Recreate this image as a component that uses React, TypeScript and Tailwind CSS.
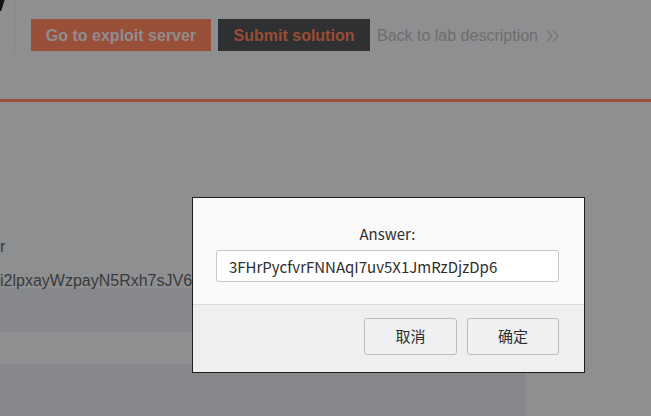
function DoubleChevron() {
  return (
    <svg width="13" height="12" viewBox="0 0 13 12" fill="none" stroke="#6e6e6f" strokeWidth="1.1">
      <polyline points="1,0.5 6,6 1,11.5" />
      <polyline points="7,0.5 12,6 7,11.5" />
    </svg>
  );
}

export default function App() {
  return (
    <div className="relative h-[416px] w-[651px] overflow-hidden bg-[#8e8f91] font-['Liberation_Sans',Arial,sans-serif]">
      <header className="relative flex h-[99px]">
        <svg className="absolute left-0 top-0" width="6" height="12" viewBox="0 0 6 12">
          <polygon points="0,0 4.6,0 1.2,11 0,11" fill="#141414" />
        </svg>
        <div className="ml-[14px] h-[52px] w-px bg-[#848587]" />
        <div className="ml-[16px] mt-[19px] flex h-[32px] items-center">
          <button className="flex h-[32px] w-[180px] items-center justify-center bg-[#9a4f38] pt-[2px] text-[16px] font-bold text-[#8e8e8f]">
            Go to exploit server
          </button>
          <button className="ml-[7px] flex h-[32px] w-[152px] items-center justify-center bg-[#2f3032] pt-[2px] text-[16px] font-bold text-[#9a4c35]">
            Submit solution
          </button>
          <a className="ml-[7px] flex items-center gap-[8px] pt-[2px] text-[16px] text-[#6e6e6f]">
            Back to lab description
            <DoubleChevron />
          </a>
        </div>
      </header>
      <div className="h-[3px] bg-[#9a4f38]" />

      <section className="w-[526px] text-[16px] text-[#3a3a3b]">
        <div className="mt-[135px] h-[19px] leading-[19px]">r</div>
        <div className="mt-[15px] h-[17px] whitespace-nowrap leading-[19px]">i2lpxayWzpayN5Rxh7sJV6</div>
        <div className="h-[44px] bg-[#86878a]" />
        <div className="h-[32px]" />
        <div className="h-[60px] bg-[#86878a]" />
      </section>

      <div className="absolute left-[192px] top-[197px] w-[393px] border border-[#1d1d1d] font-['Noto_Sans_CJK_SC',sans-serif] text-[15px] text-[#2e2e2e]">
        <div className="h-[106px] bg-[#fafafa] pl-[23px] pr-[25px] pt-[26px]">
          <div className="text-center leading-[20px]">Answer:</div>
          <input
            readOnly
            value="3FHrPycfvrFNNAqI7uv5X1JmRzDjzDp6"
            className="mt-[6px] h-[32px] w-full rounded-[3px] border border-[#c6c6c6] bg-white px-[12px] text-[15px] text-[#2e2e2e] outline-none"
          />
        </div>
        <div className="h-px bg-[#dcdcdc]" />
        <div className="flex h-[67px] justify-end gap-[10px] bg-[#efefef] pr-[25px] pt-[13px]">
          <button className="h-[37px] w-[93px] rounded-[3px] border border-[#bdbdbd] bg-[#eff0f1] text-[15px] text-[#2e2e2e]">
            取消
          </button>
          <button className="h-[37px] w-[92px] rounded-[3px] border border-[#bdbdbd] bg-[#eff0f1] text-[15px] text-[#2e2e2e]">
            确定
          </button>
        </div>
      </div>
    </div>
  );
}
